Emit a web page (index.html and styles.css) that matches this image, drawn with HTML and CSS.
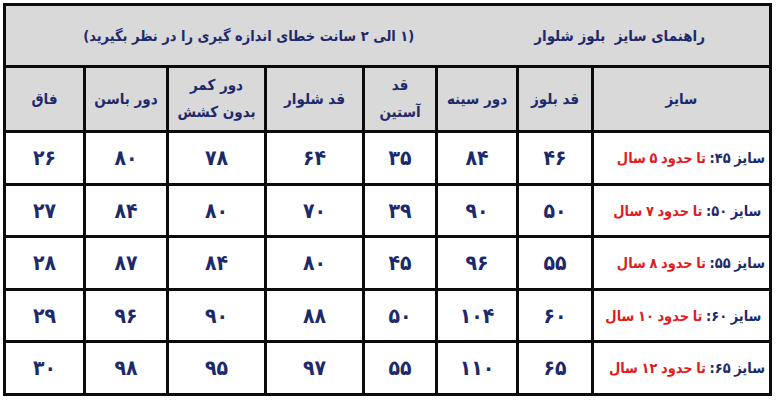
FILE: index.html
```html
<!DOCTYPE html>
<html lang="fa" dir="rtl">
<head>
<meta charset="utf-8">
<title>راهنمای سایز بلوز شلوار</title>
<link rel="stylesheet" href="styles.css">
</head>
<body>
<div class="chart">
  <div class="title">
    <span class="title-main">راهنمای سایز&nbsp; بلوز شلوار</span>
    <span class="title-note">(۱ الی ۲ سانت خطای اندازه گیری را در نظر بگیرید)</span>
  </div>

  <div class="head">سایز</div>
  <div class="head">قد بلوز</div>
  <div class="head">دور سینه</div>
  <div class="head">قد<br>آستین</div>
  <div class="head">قد شلوار</div>
  <div class="head">دور کمر<br>بدون کشش</div>
  <div class="head">دور باسن</div>
  <div class="head">فاق</div>

  <div class="size">سایز ۴۵: <span class="age">تا حدود ۵ سال</span></div>
  <div class="num">۴۶</div><div class="num">۸۴</div><div class="num">۳۵</div><div class="num">۶۴</div><div class="num">۷۸</div><div class="num">۸۰</div><div class="num">۲۶</div>

  <div class="size">&nbsp;سایز ۵۰: <span class="age">تا حدود ۷ سال</span></div>
  <div class="num">۵۰</div><div class="num">۹۰</div><div class="num">۳۹</div><div class="num">۷۰</div><div class="num">۸۰</div><div class="num">۸۴</div><div class="num">۲۷</div>

  <div class="size">سایز ۵۵: <span class="age">تا حدود ۸ سال</span></div>
  <div class="num">۵۵</div><div class="num">۹۶</div><div class="num">۴۵</div><div class="num">۸۰</div><div class="num">۸۴</div><div class="num">۸۷</div><div class="num">۲۸</div>

  <div class="size">&nbsp;سایز ۶۰: <span class="age">تا حدود ۱۰ سال</span></div>
  <div class="num">۶۰</div><div class="num">۱۰۴</div><div class="num">۵۰</div><div class="num">۸۸</div><div class="num">۹۰</div><div class="num">۹۶</div><div class="num">۲۹</div>

  <div class="size">سایز ۶۵: <span class="age">تا حدود ۱۲ سال</span></div>
  <div class="num">۶۵</div><div class="num">۱۱۰</div><div class="num">۵۵</div><div class="num">۹۷</div><div class="num">۹۵</div><div class="num">۹۸</div><div class="num">۳۰</div>
</div>
</body>
</html>
```

FILE: styles.css
```css
html, body {
  margin: 0;
  padding: 0;
  background: #ffffff;
}

body {
  padding: 3px 5px 0 3px;
  font-family: "DejaVu Sans Condensed", "DejaVu Sans", sans-serif;
  font-weight: bold;
  color: #1c2a6c;
}

.chart {
  direction: rtl;
  width: 769px;
  box-sizing: border-box;
  display: grid;
  grid-template-columns: 175px 72px 78px 70px 95px 95px 80px 77px;
  grid-template-rows: 59px 62px 50px 49px 50px 49px 50px;
  gap: 3px;
  padding: 3px;
  background: #0b0b0b;
}

.title {
  grid-column: 1 / -1;
  background: #d9d9d9;
  display: flex;
  align-items: center;
  padding-right: 64px;
  gap: 120px;
  font-size: 15px;
}

.title-note {
  font-size: 14.5px;
}

.head {
  background: #d9d9d9;
  display: flex;
  align-items: center;
  justify-content: center;
  text-align: center;
  font-size: 15px;
  line-height: 27px;
}

.num {
  background: #ffffff;
  display: flex;
  align-items: center;
  justify-content: center;
  font-size: 21px;
}

.size {
  background: #ffffff;
  display: flex;
  align-items: center;
  justify-content: flex-start;
  padding-right: 4px;
  font-size: 14.5px;
  word-spacing: -1px;
  white-space: pre;
}

.age {
  color: #e21b1f;
}
```
